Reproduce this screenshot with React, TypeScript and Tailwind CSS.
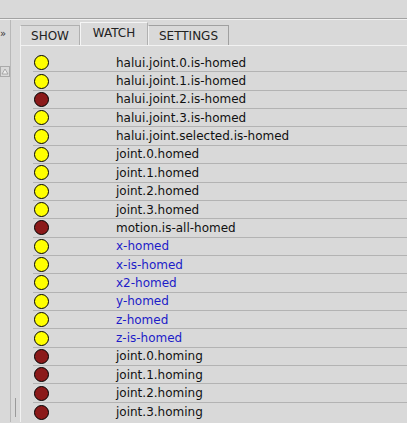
import React from 'react';

type Pin = { name: string; on: boolean; blue?: boolean };

const pins: Pin[] = [
  { name: 'halui.joint.0.is-homed', on: true },
  { name: 'halui.joint.1.is-homed', on: true },
  { name: 'halui.joint.2.is-homed', on: false },
  { name: 'halui.joint.3.is-homed', on: true },
  { name: 'halui.joint.selected.is-homed', on: true },
  { name: 'joint.0.homed', on: true },
  { name: 'joint.1.homed', on: true },
  { name: 'joint.2.homed', on: true },
  { name: 'joint.3.homed', on: true },
  { name: 'motion.is-all-homed', on: false },
  { name: 'x-homed', on: true, blue: true },
  { name: 'x-is-homed', on: true, blue: true },
  { name: 'x2-homed', on: true, blue: true },
  { name: 'y-homed', on: true, blue: true },
  { name: 'z-homed', on: true, blue: true },
  { name: 'z-is-homed', on: true, blue: true },
  { name: 'joint.0.homing', on: false },
  { name: 'joint.1.homing', on: false },
  { name: 'joint.2.homing', on: false },
  { name: 'joint.3.homing', on: false },
];

const Led = ({ on }: { on: boolean }) => (
  <div
    className={
      'w-[15px] h-[15px] rounded-full border border-black ' +
      (on ? 'bg-[#ffff00]' : 'bg-[#8b1a1a]')
    }
  />
);

export default function App() {
  return (
    <div
      className="w-[407px] h-[423px] overflow-hidden bg-[#d9d9d9] text-[12px] text-black"
      style={{ fontFamily: '"DejaVu Sans", sans-serif' }}
    >
      <div className="h-[19px] border-b border-[#a3a3a3]" />
      <div className="flex h-[403px] border-t border-[#f0f0f0]">
        {/* left strip */}
        <div className="w-[20px] flex shrink-0">
          <div className="w-[10px] flex flex-col">
            <div className="h-[13px] mt-[8px] leading-[12px] text-[10px] text-[#333]">»</div>
            <div className="mt-[25px] w-[10px] h-[11px] border border-[#aaa] bg-[#d9d9d9] flex items-center justify-center">
              <svg width="8" height="7" viewBox="0 0 8 7">
                <path d="M4 1 L7 6 L1 6 Z" fill="#eee" stroke="#999" strokeWidth="0.8" />
              </svg>
            </div>
            <div className="flex-1" />
          </div>
          <div className="w-px bg-[#b8b8b8]" />
          <div className="flex-1 flex flex-col items-center justify-end pb-[5px]">
            <div className="w-px h-[19px] bg-[#9a9a9a]" />
          </div>
        </div>

        {/* notebook */}
        <div className="flex-1 flex flex-col">
          <div className="flex items-end h-[24px] mt-[1px]">
            <div className="h-[20px] w-[60px] border border-b-0 border-[#b0b0b0] border-l-[#f0f0f0] flex items-center justify-center text-[#222]">
              SHOW
            </div>
            <div className="h-[23px] w-[68px] border border-b-0 border-[#b0b0b0] border-l-[#f5f5f5] border-t-[#f5f5f5] flex items-center justify-center text-[#222] pb-[3px]">
              WATCH
            </div>
            <div className="h-[20px] w-[81px] border border-b-0 border-[#a0a0a0] border-l-[#f0f0f0] flex items-center justify-center text-[#222]">
              SETTINGS
            </div>
          </div>
          <div className="flex-1 border-t border-l border-[#f2f2f2] pt-[8px]">
            {pins.map((p, i) => (
              <div
                key={p.name}
                className={
                  'flex items-center h-[18.37px] ml-[12px] ' +
                  (i < pins.length - 1 ? 'border-b border-[#b3b3b3]' : '')
                }
              >
                <div className="w-[83px] pl-[1px] flex items-center">
                  <Led on={p.on} />
                </div>
                <span className={p.blue ? 'text-[#1c1cc8]' : 'text-[#111]'}>{p.name}</span>
              </div>
            ))}
          </div>
        </div>
      </div>
    </div>
  );
}
